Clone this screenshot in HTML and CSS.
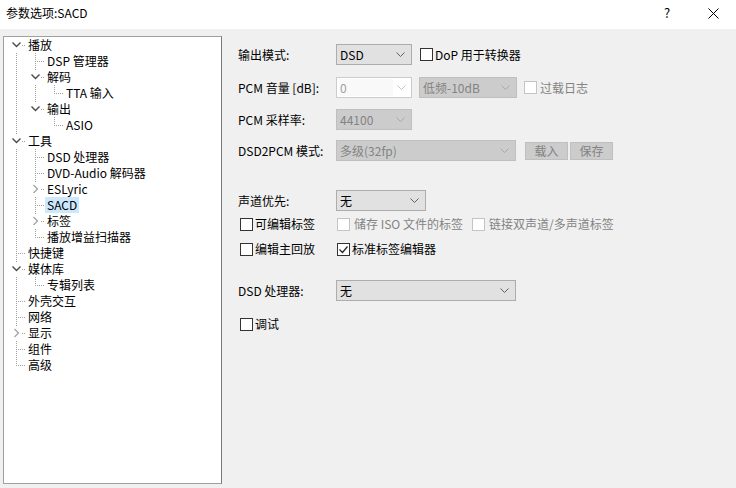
FILE: index.html
```html
<!DOCTYPE html>
<html lang="zh-CN">
<head>
<meta charset="utf-8">
<title>参数选项:SACD</title>
<link rel="stylesheet" href="styles.css">
</head>
<body>
<div class="window">
  <div class="titlebar">
    <span class="title">参数选项:SACD</span>
    <span class="tb-btn help">?</span>
    <span class="tb-btn close"><svg width="11" height="11" viewBox="0 0 11 11"><path d="M0.5 0.5 L10.5 10.5 M10.5 0.5 L0.5 10.5" stroke="#000" stroke-width="1" fill="none"/></svg></span>
  </div>
  <div class="content">
    <div class="tree">
      <div class="tr"><span class="node first"><svg class="chev" viewBox="0 0 22 16"><rect x="7" y="1" width="11" height="14" fill="#fff"/><polyline points="8.5,5.5 12.5,9.5 16.5,5.5" fill="none" stroke="#4a4a4a" stroke-width="1.4"/></svg></span><span class="lbl">播放</span></div>
      <div class="tr"><span class="ind pipe"></span><span class="node tee"></span><span class="lbl">DSP 管理器</span></div>
      <div class="tr"><span class="ind pipe"></span><span class="node tee"><svg class="chev" viewBox="0 0 22 16"><rect x="7" y="1" width="11" height="14" fill="#fff"/><polyline points="8.5,5.5 12.5,9.5 16.5,5.5" fill="none" stroke="#4a4a4a" stroke-width="1.4"/></svg></span><span class="lbl">解码</span></div>
      <div class="tr"><span class="ind pipe"></span><span class="ind pipe"></span><span class="node elbow"></span><span class="lbl">TTA 输入</span></div>
      <div class="tr"><span class="ind pipe"></span><span class="node elbow"><svg class="chev" viewBox="0 0 22 16"><rect x="7" y="1" width="11" height="14" fill="#fff"/><polyline points="8.5,5.5 12.5,9.5 16.5,5.5" fill="none" stroke="#4a4a4a" stroke-width="1.4"/></svg></span><span class="lbl">输出</span></div>
      <div class="tr"><span class="ind pipe"></span><span class="ind"></span><span class="node elbow"></span><span class="lbl">ASIO</span></div>
      <div class="tr"><span class="node tee"><svg class="chev" viewBox="0 0 22 16"><rect x="7" y="1" width="11" height="14" fill="#fff"/><polyline points="8.5,5.5 12.5,9.5 16.5,5.5" fill="none" stroke="#4a4a4a" stroke-width="1.4"/></svg></span><span class="lbl">工具</span></div>
      <div class="tr"><span class="ind pipe"></span><span class="node tee"></span><span class="lbl">DSD 处理器</span></div>
      <div class="tr"><span class="ind pipe"></span><span class="node tee"></span><span class="lbl">DVD-Audio 解码器</span></div>
      <div class="tr"><span class="ind pipe"></span><span class="node tee"><svg class="chev" viewBox="0 0 22 16"><rect x="7" y="1" width="11" height="14" fill="#fff"/><polyline points="10.5,4 14.5,8 10.5,12" fill="none" stroke="#a6a6a6" stroke-width="1.4"/></svg></span><span class="lbl">ESLyric</span></div>
      <div class="tr"><span class="ind pipe"></span><span class="node tee"></span><span class="lbl sel-item">SACD</span></div>
      <div class="tr"><span class="ind pipe"></span><span class="node tee"><svg class="chev" viewBox="0 0 22 16"><rect x="7" y="1" width="11" height="14" fill="#fff"/><polyline points="10.5,4 14.5,8 10.5,12" fill="none" stroke="#a6a6a6" stroke-width="1.4"/></svg></span><span class="lbl">标签</span></div>
      <div class="tr"><span class="ind pipe"></span><span class="node elbow"></span><span class="lbl">播放增益扫描器</span></div>
      <div class="tr"><span class="node tee"></span><span class="lbl">快捷键</span></div>
      <div class="tr"><span class="node tee"><svg class="chev" viewBox="0 0 22 16"><rect x="7" y="1" width="11" height="14" fill="#fff"/><polyline points="8.5,5.5 12.5,9.5 16.5,5.5" fill="none" stroke="#4a4a4a" stroke-width="1.4"/></svg></span><span class="lbl">媒体库</span></div>
      <div class="tr"><span class="ind pipe"></span><span class="node elbow"></span><span class="lbl">专辑列表</span></div>
      <div class="tr"><span class="node tee"></span><span class="lbl">外壳交互</span></div>
      <div class="tr"><span class="node tee"></span><span class="lbl">网络</span></div>
      <div class="tr"><span class="node tee"><svg class="chev" viewBox="0 0 22 16"><rect x="7" y="1" width="11" height="14" fill="#fff"/><polyline points="10.5,4 14.5,8 10.5,12" fill="none" stroke="#a6a6a6" stroke-width="1.4"/></svg></span><span class="lbl">显示</span></div>
      <div class="tr"><span class="node tee"></span><span class="lbl">组件</span></div>
      <div class="tr"><span class="node elbow"></span><span class="lbl">高级</span></div>
    </div>

    <div class="form">
      <div class="row r1">
        <span class="lab">输出模式:</span>
        <div class="combo w76"><span class="val">DSD</span><svg class="arr" width="9" height="5" viewBox="0 0 9 5"><polyline points="0.5,0.5 4.5,4.5 8.5,0.5" fill="none" stroke="#606060" stroke-width="1"/></svg></div>
        <label class="chk ml8"><span class="box"></span><span class="ctext">DoP 用于转换器</span></label>
      </div>
      <div class="row r2">
        <span class="lab">PCM 音量 [dB]:</span>
        <div class="edit-combo w76"><span class="field">0</span><svg class="arr" width="9" height="5" viewBox="0 0 9 5"><polyline points="0.5,0.5 4.5,4.5 8.5,0.5" fill="none" stroke="#c4c4c4" stroke-width="1"/></svg></div>
        <div class="combo disabled w98 ml7"><span class="val">低频-10dB</span><svg class="arr" width="9" height="5" viewBox="0 0 9 5"><polyline points="0.5,0.5 4.5,4.5 8.5,0.5" fill="none" stroke="#a8a8a8" stroke-width="1"/></svg></div>
        <label class="chk disabled ml7"><span class="box"></span><span class="ctext gap3">过载日志</span></label>
      </div>
      <div class="row r3">
        <span class="lab">PCM 采样率:</span>
        <div class="combo disabled w76"><span class="val">44100</span><svg class="arr" width="9" height="5" viewBox="0 0 9 5"><polyline points="0.5,0.5 4.5,4.5 8.5,0.5" fill="none" stroke="#a8a8a8" stroke-width="1"/></svg></div>
      </div>
      <div class="row r4">
        <span class="lab">DSD2PCM 模式:</span>
        <div class="combo disabled w180"><span class="val">多级(32fp)</span><svg class="arr" width="9" height="5" viewBox="0 0 9 5"><polyline points="0.5,0.5 4.5,4.5 8.5,0.5" fill="none" stroke="#a8a8a8" stroke-width="1"/></svg></div>
        <span class="btn ml9">载入</span>
        <span class="btn ml2">保存</span>
      </div>
      <div class="row r5">
        <span class="lab">声道优先:</span>
        <div class="combo w90"><span class="val">无</span><svg class="arr" width="9" height="5" viewBox="0 0 9 5"><polyline points="0.5,0.5 4.5,4.5 8.5,0.5" fill="none" stroke="#606060" stroke-width="1"/></svg></div>
      </div>
      <div class="crow r6">
        <label class="chk col1"><span class="box"></span><span class="ctext">可编辑标签</span></label>
        <label class="chk disabled col2"><span class="box"></span><span class="ctext gap4">储存 ISO 文件的标签</span></label>
        <label class="chk disabled"><span class="box"></span><span class="ctext gap4">链接双声道/多声道标签</span></label>
      </div>
      <div class="crow r7">
        <label class="chk col1"><span class="box"></span><span class="ctext">编辑主回放</span></label>
        <label class="chk col2"><span class="box checked"><svg width="11" height="11" viewBox="0 0 11 11"><polyline points="1.5,5.5 4.5,8.5 9.5,2.5" fill="none" stroke="#222" stroke-width="1.2"/></svg></span><span class="ctext">标准标签编辑器</span></label>
      </div>
      <div class="row r8">
        <span class="lab">DSD 处理器:</span>
        <div class="combo w180"><span class="val">无</span><svg class="arr" width="9" height="5" viewBox="0 0 9 5"><polyline points="0.5,0.5 4.5,4.5 8.5,0.5" fill="none" stroke="#606060" stroke-width="1"/></svg></div>
      </div>
      <div class="crow r9">
        <label class="chk col1"><span class="box"></span><span class="ctext">调试</span></label>
      </div>
    </div>
  </div>
</div>
</body>
</html>
```

FILE: styles.css
```css
* { box-sizing: border-box; }
html, body { margin: 0; padding: 0; }
body {
  font-family: "Noto Sans CJK SC", "Noto Sans", sans-serif;
  font-size: 12px;
  line-height: 16px;
  color: #000;
  background: #f0f0f0;
}
.window {
  width: 736px;
  height: 488px;
  overflow: hidden;
  background: #f0f0f0;
}
.titlebar {
  height: 29px;
  background: #fff;
  display: flex;
  align-items: flex-start;
}
.title {
  padding: 5px 0 0 6px;
  flex: 1;
}
.tb-btn {
  width: 46px;
  height: 29px;
  display: flex;
  justify-content: center;
}
.help {
  padding-top: 5px;
  font-size: 13px;
}
.close {
  padding-top: 8px;
}
.close svg { display: block; }

.content {
  display: flex;
  padding: 7px 0 0 3px;
  height: 459px;
}
.tree {
  width: 219px;
  height: 448px;
  flex: none;
  background: #fff;
  border: 1px solid #a0a0a0;
  border-right-color: #7a7a7a;
}
.tr {
  display: flex;
  height: 16px;
  white-space: nowrap;
}
.ind {
  width: 19px;
  height: 16px;
  flex: none;
}
.ind.pipe {
  background: repeating-linear-gradient(to bottom, #a0a0a0 0 1px, transparent 1px 2px) 12px 0 / 1px 16px no-repeat;
}
.node {
  width: 22px;
  height: 16px;
  flex: none;
  background-repeat: no-repeat;
}
.node.tee {
  background-image: repeating-linear-gradient(to right, #a0a0a0 0 1px, transparent 1px 2px), repeating-linear-gradient(to bottom, #a0a0a0 0 1px, transparent 1px 2px);
  background-position: 14px 8px, 12px 0;
  background-size: 8px 1px, 1px 16px;
}
.node.elbow {
  background-image: repeating-linear-gradient(to right, #a0a0a0 0 1px, transparent 1px 2px), repeating-linear-gradient(to bottom, #a0a0a0 0 1px, transparent 1px 2px);
  background-position: 14px 8px, 12px 0;
  background-size: 8px 1px, 1px 9px;
}
.node.first {
  background-image: repeating-linear-gradient(to right, #a0a0a0 0 1px, transparent 1px 2px), repeating-linear-gradient(to bottom, #a0a0a0 0 1px, transparent 1px 2px);
  background-position: 14px 8px, 12px 8px;
  background-size: 8px 1px, 1px 8px;
}
.chev {
  display: block;
  width: 22px;
  height: 16px;
}
.lbl {
  padding: 0 2px;
  height: 16px;
  line-height: 16px;
}
.sel-item { background: #cce8ff; }

.form {
  display: flex;
  flex-direction: column;
  padding: 8px 0 0 16px;
}
.row {
  display: flex;
  align-items: center;
  height: 21px;
}
.crow {
  display: flex;
  align-items: center;
  height: 16px;
}
.r2 { margin-top: 12px; }
.r3 { margin-top: 11px; }
.r4 { margin-top: 10px; }
.r5 { margin-top: 29px; }
.r6 { margin-top: 5px; }
.r7 { margin-top: 9px; }
.r8 { margin-top: 23px; }
.r9 { margin-top: 15px; }

.lab {
  width: 98px;
  flex: none;
  white-space: nowrap;
}
.combo, .edit-combo {
  height: 21px;
  flex: none;
  display: flex;
  align-items: center;
  justify-content: space-between;
  border: 1px solid #adadad;
  background: #e1e1e1;
  padding: 0 6px 0 3px;
  white-space: nowrap;
}
.combo.disabled {
  background: #cccccc;
  border-color: #bfbfbf;
  color: #838383;
}
.edit-combo {
  background: #fff;
  border-color: #cccccc;
  padding: 0 5px 0 2px;
}
.edit-combo .field {
  width: 54px;
  height: 17px;
  line-height: 17px;
  background: #f9f9f9;
  color: #a0a0a0;
  padding-left: 1px;
}
.arr { display: block; flex: none; }
.w76 { width: 76px; }
.w90 { width: 90px; }
.w98 { width: 98px; }
.w180 { width: 180px; }
.ml2 { margin-left: 2px; }
.ml7 { margin-left: 7px; }
.ml8 { margin-left: 8px; }
.ml9 { margin-left: 9px; }

.btn {
  width: 43px;
  height: 18px;
  flex: none;
  display: flex;
  align-items: center;
  justify-content: center;
  background: #cccccc;
  border: 1px solid #bfbfbf;
  color: #838383;
}

.chk {
  display: flex;
  align-items: center;
  flex: none;
  white-space: nowrap;
}
.box {
  width: 13px;
  height: 13px;
  flex: none;
  border: 1px solid #333;
  background: #fff;
  display: flex;
  align-items: center;
  justify-content: center;
}
.box svg { display: block; }
.ctext { margin-left: 2px; }
.gap3 { margin-left: 3px; }
.gap4 { margin-left: 4px; }
.chk.disabled { color: #838383; }
.chk.disabled .box { border-color: #c4c4c4; }
.col1 { width: 99px; padding-left: 2px; }
.col2 { width: 135px; }
```
